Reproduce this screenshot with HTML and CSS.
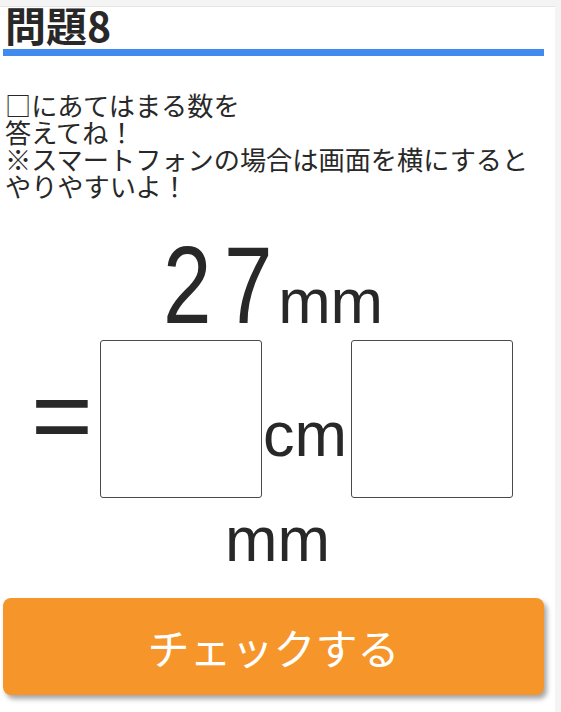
FILE: index.html
```html
<!DOCTYPE html>
<html lang="ja">
<head>
<meta charset="utf-8">
<link rel="stylesheet" href="styles.css">
</head>
<body>
<div class="page">
  <h1 class="title">問題8</h1>
  <p class="lead">□にあてはまる数を<br>答えてね！<br>※スマートフォンの場合は画面を横にすると<br>やりやすいよ！</p>
  <div class="given"><span class="num"><span class="digit">2</span><span class="digit">7</span></span><span class="unit">mm</span></div>
  <div class="answer-row">
    <span class="eq">=</span>
    <span class="box"></span>
    <span class="unit cm">cm</span>
    <span class="box"></span>
  </div>
  <div class="tail">mm</div>
  <button class="check">チェックする</button>
</div>
</body>
</html>
```

FILE: styles.css
```css
html, body {
  margin: 0;
  padding: 0;
  background: #f4f4f4;
}
body {
  font-family: "Noto Sans CJK JP", "Noto Sans", sans-serif;
  color: #282828;
}
.page {
  margin-top: 6px;
  width: 555px;
  height: 706px;
  background: #ffffff;
  border-top: 1px solid #e4e4e4;
  box-sizing: border-box;
  padding-top: 1px;
}
.title {
  margin: 0 11px 0 3px;
  padding: 0 0 9px 2px;
  font-size: 41px;
  font-weight: bold;
  line-height: 32px;
  border-bottom: 7px solid #418bf0;
}
.lead {
  margin: 36px 0 0 5px;
  font-size: 26.2px;
  line-height: 27px;
}
.given {
  margin-top: 35px;
  height: 100px;
  display: flex;
  justify-content: center;
  align-items: baseline;
  font-family: "Liberation Sans", Arial, sans-serif;
  line-height: 100px;
  padding-right: 15px;
}
.num {
  font-size: 109px;
}
.digit {
  display: inline-block;
  transform: scaleX(0.8);
}
.given .unit {
  font-size: 63px;
}
.answer-row {
  display: flex;
  align-items: flex-start;
  padding-left: 31px;
  margin-top: 5px;
  font-family: "Liberation Sans", Arial, sans-serif;
}
.eq {
  font-size: 106px;
  line-height: 106px;
  margin-top: 22px;
  margin-right: 7px;
}
.box {
  display: block;
  box-sizing: border-box;
  width: 162px;
  height: 158px;
  border: 1px solid #4a4a4a;
  border-radius: 3px;
}
.cm {
  font-size: 63px;
  line-height: 63px;
  margin: 63px 4px 0 1px;
}
.tail {
  margin-top: 10px;
  text-align: center;
  font-family: "Liberation Sans", Arial, sans-serif;
  font-size: 63px;
  line-height: 63px;
}
.check {
  display: block;
  margin: 27px 0 0 3px;
  width: 541px;
  height: 97px;
  border: none;
  border-radius: 8px;
  background: #f6962a;
  color: #ffffff;
  font-family: "Noto Sans CJK JP", sans-serif;
  font-size: 42px;
  box-shadow: 3px 4px 5px rgba(0, 0, 0, 0.35);
}
```
